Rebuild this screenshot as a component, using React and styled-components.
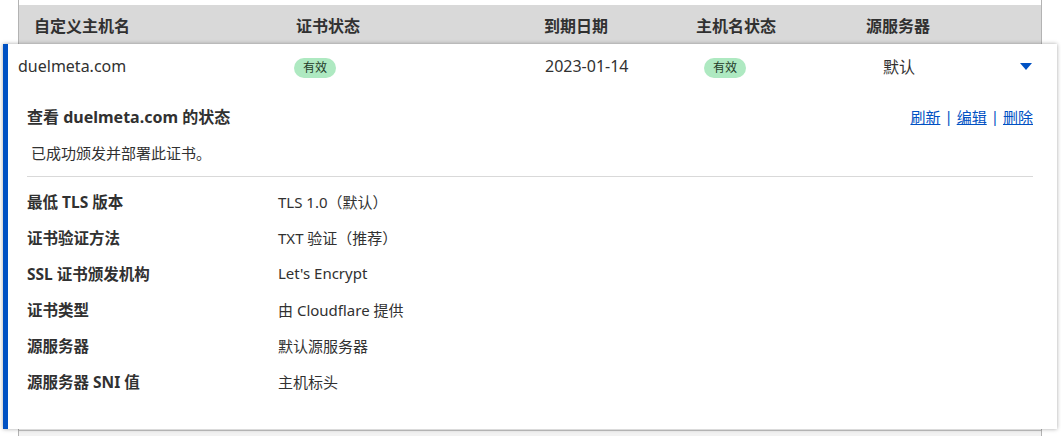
import React from 'react'
import styled, { createGlobalStyle } from 'styled-components'

const GlobalStyle = createGlobalStyle`
  body {
    margin: 0;
    background: #fff;
    font-family: "Noto Sans", "Noto Sans CJK SC", sans-serif;
    color: #313131;
  }
`

const Table = styled.div`
  margin: 0 19px 0 18px;
  padding-top: 5px;
  border-left: 1px solid #b3b3b3;
  border-right: 1px solid #b3b3b3;
`
const HeaderRow = styled.div`
  display: grid;
  grid-template-columns: 262px 248px 152px 170px 1fr;
  align-items: center;
  height: 39px;
  padding-left: 15px;
  background: #d9d9d9;
  font-size: 16px;
  font-weight: 700;
`
const Card = styled.div`
  margin: 0 -16px 0 -16px;
  background: #fff;
  border-left: 5px solid #0051c3;
  box-shadow: 0 0 4px rgba(0, 0, 0, 0.35);
  position: relative;
`
const SummaryRow = styled.div`
  display: grid;
  grid-template-columns: 274px 253px 159px 179px 1fr 40px;
  align-items: center;
  height: 44px;
  padding-left: 10px;
  font-size: 16px;
`
const Cell = styled.div`
  padding-left: ${(p) => p.$indent || 0}px;
`
const Badge = styled.span`
  display: inline-block;
  background: #aee9c1;
  color: #1f3a28;
  font-size: 12px;
  line-height: 20px;
  height: 20px;
  padding: 0 9px;
  border-radius: 10px;
  margin-left: ${(p) => p.$offset || 0}px;
`
const Caret = styled.div`
  width: 0;
  height: 0;
  border-left: 6.5px solid transparent;
  border-right: 6.5px solid transparent;
  border-top: 7px solid #0051c3;
  margin-left: 3px;
`
const Details = styled.div`
  padding: 16px 24px 30px 19px;
  font-size: 15px;
`
const TitleBar = styled.div`
  display: flex;
  justify-content: space-between;
  align-items: center;
  height: 24px;
`
const Title = styled.h3`
  margin: 0;
  font-size: 16px;
  font-weight: 700;
`
const Actions = styled.div`
  color: #0051c3;
  font-size: 15px;
  display: flex;
  gap: 4px;
`
const ActionLink = styled.a`
  color: #0051c3;
  text-decoration: underline;
  cursor: pointer;
`
const Message = styled.p`
  margin: 14px 0 0 4px;
  font-size: 15px;
  line-height: 22px;
`
const Divider = styled.hr`
  border: none;
  border-top: 1px solid #d9d9d9;
  margin: 12px 0 6px;
`
const InfoRow = styled.div`
  display: grid;
  grid-template-columns: 251px 1fr;
  align-items: center;
  height: 36px;
`
const Label = styled.div`
  font-weight: 700;
  font-size: 15.5px;
`
const Value = styled.div``
const NextRow = styled.div`
  height: 10px;
  margin-top: 1px;
  background: #f2f2f2;
  border-top: 1px solid #c4c4c4;
`

const info = [
  ['最低 TLS 版本', 'TLS 1.0（默认）'],
  ['证书验证方法', 'TXT 验证（推荐）'],
  ['SSL 证书颁发机构', "Let's Encrypt"],
  ['证书类型', '由 Cloudflare 提供'],
  ['源服务器', '默认源服务器'],
  ['源服务器 SNI 值', '主机标头'],
]

const App = () => {
  return (
    <>
      <GlobalStyle />
      <Table>
        <HeaderRow>
          <div>自定义主机名</div>
          <div>证书状态</div>
          <div>到期日期</div>
          <div>主机名状态</div>
          <div>源服务器</div>
        </HeaderRow>
        <Card>
          <SummaryRow>
            <Cell>duelmeta.com</Cell>
            <Cell><Badge $offset={2}>有效</Badge></Cell>
            <Cell>2023-01-14</Cell>
            <Cell><Badge>有效</Badge></Cell>
            <Cell>默认</Cell>
            <Caret />
          </SummaryRow>
          <Details>
            <TitleBar>
              <Title>查看 duelmeta.com 的状态</Title>
              <Actions>
                <ActionLink>刷新</ActionLink>|<ActionLink>编辑</ActionLink>|<ActionLink>删除</ActionLink>
              </Actions>
            </TitleBar>
            <Message>已成功颁发并部署此证书。</Message>
            <Divider />
            {info.map(([label, value]) => (
              <InfoRow key={label}>
                <Label>{label}</Label>
                <Value>{value}</Value>
              </InfoRow>
            ))}
          </Details>
        </Card>
        <NextRow />
      </Table>
    </>
  )
}
export default App
